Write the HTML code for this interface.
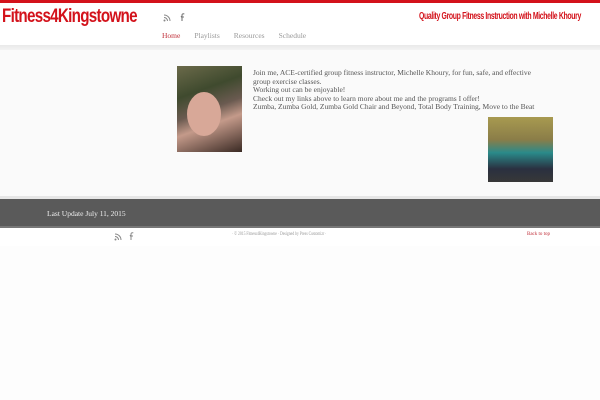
<!DOCTYPE html>
<html><head><meta charset="utf-8"><style>
*{margin:0;padding:0;box-sizing:border-box}
body{width:600px;height:400px;overflow:hidden;background:#fff;font-family:"Liberation Serif",serif;position:relative}
.abs{position:absolute}
.red{color:#d3121b}
</style></head><body>
<div class="abs" style="left:0;top:0;width:600px;height:3px;background:#d3121b"></div>
<div class="abs red" style="left:2px;top:6px;font-family:'Liberation Sans',sans-serif;font-weight:bold;font-size:19px;letter-spacing:-0.9px;transform:scaleX(0.8);transform-origin:left;white-space:nowrap">Fitness4Kingstowne</div>
<div class="abs red" style="left:419px;top:11px;font-family:'Liberation Sans',sans-serif;font-weight:bold;font-size:10px;letter-spacing:-0.5px;transform:scaleX(0.69);transform-origin:left;white-space:nowrap">Quality Group Fitness Instruction with Michelle Khoury</div>
<svg class="abs" style="left:163px;top:12px" width="30" height="10" viewBox="0 0 30 10"><g fill="none" stroke="#888" stroke-width="1"><path d="M1 3a6 6 0 0 1 6 6M1 5.5a3.5 3.5 0 0 1 3.5 3.5"/></g><circle cx="1.5" cy="8.5" r="1" fill="#888"/><path d="M19 9V4.5h-1.2M19 4.5V3.2c0-1 .5-1.4 1.5-1.4h.8M18 5h3" stroke="#777" stroke-width="1.1" fill="none"/></svg>
<div class="abs" style="left:162px;top:31px;font-size:7.5px;color:#999;white-space:nowrap"><span style="color:#c0303a">Home</span><span style="margin-left:14px">Playlists</span><span style="margin-left:14px">Resources</span><span style="margin-left:14px">Schedule</span></div>
<div class="abs" style="left:0;top:45px;width:600px;height:5px;background:linear-gradient(#e9e9e9,#f3f3f3)"></div>
<div class="abs" style="left:0;top:50px;width:600px;height:146px;background:#fafafa"></div>
<div class="abs" style="left:177px;top:66px;width:65px;height:86px;background:linear-gradient(160deg,#6b6a4a 0%,#3f4a2e 30%,#6a5a50 50%,#c49a8a 65%,#3a2a24 100%)"></div>
<div class="abs" style="left:187px;top:92px;width:34px;height:44px;border-radius:50%;background:#d8a898"></div>
<div class="abs" style="left:253px;top:69px;font-size:7.5px;line-height:8.6px;color:#555;white-space:nowrap">Join me, ACE-certified group fitness instructor, Michelle Khoury, for fun, safe, and effective<br>group exercise classes.<br>Working out can be enjoyable!<br>Check out my links above to learn more about me and the programs I offer!<br>Zumba, Zumba Gold, Zumba Gold Chair and Beyond, Total Body Training, Move to the Beat</div>
<div class="abs" style="left:488px;top:117px;width:65px;height:65px;background:linear-gradient(#a89a50 0%,#8a7d48 35%,#2a8a8a 55%,#2a3040 80%,#383838 100%)"></div>
<div class="abs" style="left:0;top:196px;width:600px;height:3px;background:#e6e6e6"></div>
<div class="abs" style="left:0;top:199px;width:600px;height:27px;background:#5a5a5a"></div>
<div class="abs" style="left:47px;top:209px;font-size:7.5px;color:#eee">Last Update July 11, 2015</div>
<div class="abs" style="left:0;top:226px;width:600px;height:2px;background:#777"></div>
<svg class="abs" style="left:114px;top:231px" width="24" height="10" viewBox="0 0 24 10"><g fill="none" stroke="#888" stroke-width="1"><path d="M1 3a6 6 0 0 1 6 6M1 5.5a3.5 3.5 0 0 1 3.5 3.5"/></g><circle cx="1.5" cy="8.5" r="1" fill="#888"/><path d="M17 9V4.5h-1.2M17 4.5V3.2c0-1 .5-1.4 1.5-1.4h.8M16 5h3" stroke="#888" stroke-width="1" fill="none"/></svg>
<div class="abs" style="left:232px;top:232px;font-size:4.8px;color:#999;white-space:nowrap;transform:scaleX(0.78);transform-origin:left">· © 2015 Fitness4Kingstowne · Designed by Press Customizr ·</div>
<div class="abs" style="left:527px;top:232px;font-size:5px;color:#c0303a">Back to top</div>
<div class="abs" style="left:0;top:246px;width:600px;height:154px;background:#fdfdfd"></div>
</body></html>
